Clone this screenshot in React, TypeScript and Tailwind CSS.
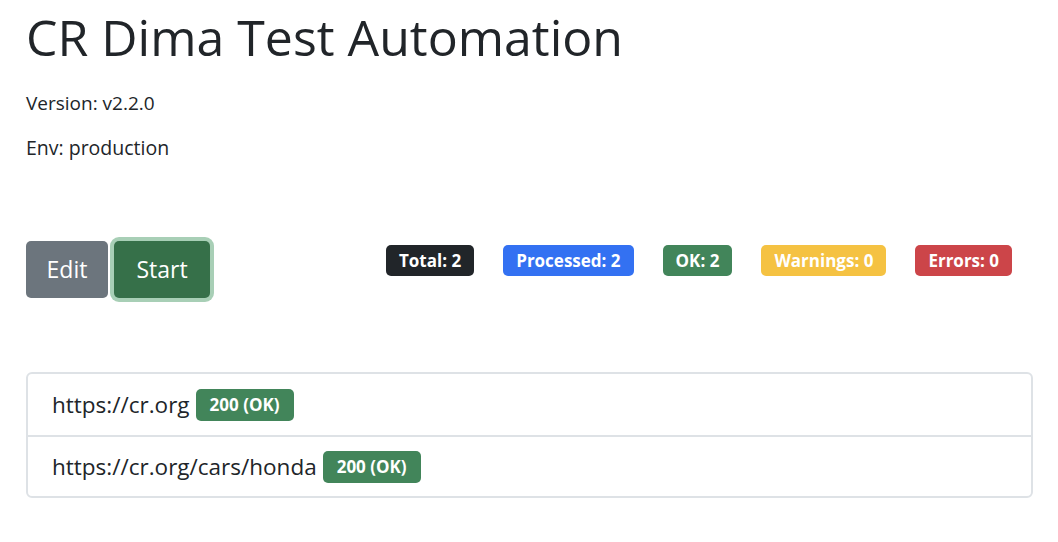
import React from "react";

const stats = [
  { label: "Total: 2", cls: "bg-[#212529]" },
  { label: "Processed: 2", cls: "bg-[#3371f2]" },
  { label: "OK: 2", cls: "bg-[#42855a]" },
  { label: "Warnings: 0", cls: "bg-[#f5c242]" },
  { label: "Errors: 0", cls: "bg-[#cc4549]" },
];

const urls = ["https://cr.org", "https://cr.org/cars/honda"];

export default function App() {
  return (
    <div
      className="min-h-[542px] bg-white px-[26px] text-[#212529]"
      style={{ fontFamily: '"Open Sans", "Noto Sans", sans-serif' }}
    >
      {/* Header */}
      <h1 className="pt-[7px] text-[50px] leading-[60px] font-normal">CR Dima Test Automation</h1>
      <p className="mt-[21px] text-[19px] leading-[30px]">Version: v2.2.0</p>
      <p className="mt-[15px] text-[19.5px] leading-[30px]">Env: production</p>

      {/* Controls */}
      <div className="mt-[78px] flex items-start">
        <div className="flex items-center">
          <button className="h-[57px] w-[82px] rounded-[5px] bg-[#6c757d] text-[23px] text-white">
            Edit
          </button>
          <button className="ml-[6px] h-[57px] w-[96px] rounded-[5px] bg-[#367049] text-[23px] text-white ring-4 ring-[#a8cfb6]">
            Start
          </button>
        </div>
        <div className="ml-[176px] mt-[4px] flex gap-[29px]">
          {stats.map((s) => (
            <span
              key={s.label}
              className={`${s.cls} flex h-[31px] items-center rounded-[5px] px-[13px] text-[17px] font-bold text-white`}
            >
              {s.label}
            </span>
          ))}
        </div>
      </div>

      {/* Results */}
      <div className="mt-[74px] w-[1007px] rounded-[6px] border-2 border-[#dee2e6]">
        {urls.map((u, i) => (
          <div
            key={u}
            className={`flex h-[61px] items-center px-[24px] text-[22.5px] ${i > 0 ? "border-t-2 border-[#dee2e6]" : ""}`}
          >
            <span>{u}</span>
            <span className="ml-[6px] flex h-[32px] items-center rounded-[5px] bg-[#42855a] px-[14px] text-[17px] font-bold text-white">
              200 (OK)
            </span>
          </div>
        ))}
      </div>
    </div>
  );
}
